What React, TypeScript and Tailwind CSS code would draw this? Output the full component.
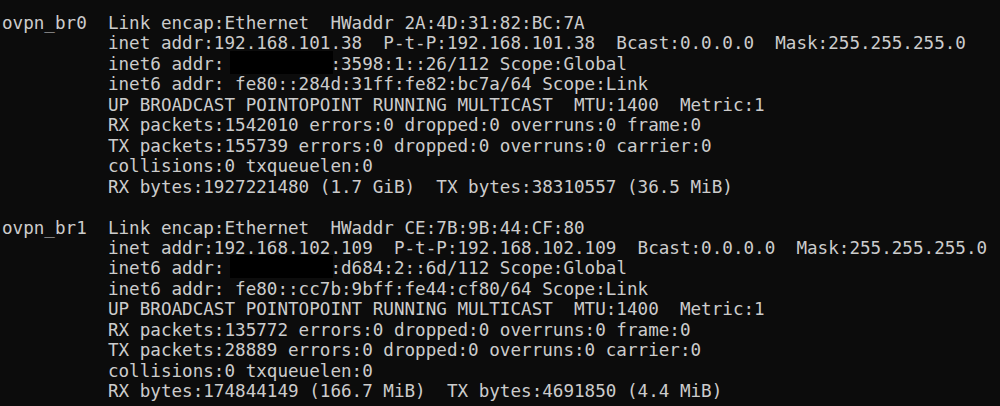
type Line = { text: string; redact?: [string, string] };

const pad = "          ";

const ifaces: { name: string; lines: Line[] }[] = [
  {
    name: "ovpn_br0",
    lines: [
      { text: "Link encap:Ethernet  HWaddr 2A:4D:31:82:BC:7A" },
      { text: "inet addr:192.168.101.38  P-t-P:192.168.101.38  Bcast:0.0.0.0  Mask:255.255.255.0" },
      { text: "", redact: ["inet6 addr: ", ":3598:1::26/112 Scope:Global"] },
      { text: "inet6 addr: fe80::284d:31ff:fe82:bc7a/64 Scope:Link" },
      { text: "UP BROADCAST POINTOPOINT RUNNING MULTICAST  MTU:1400  Metric:1" },
      { text: "RX packets:1542010 errors:0 dropped:0 overruns:0 frame:0" },
      { text: "TX packets:155739 errors:0 dropped:0 overruns:0 carrier:0" },
      { text: "collisions:0 txqueuelen:0" },
      { text: "RX bytes:1927221480 (1.7 GiB)  TX bytes:38310557 (36.5 MiB)" },
    ],
  },
  {
    name: "ovpn_br1",
    lines: [
      { text: "Link encap:Ethernet  HWaddr CE:7B:9B:44:CF:80" },
      { text: "inet addr:192.168.102.109  P-t-P:192.168.102.109  Bcast:0.0.0.0  Mask:255.255.255.0" },
      { text: "", redact: ["inet6 addr: ", ":d684:2::6d/112 Scope:Global"] },
      { text: "inet6 addr: fe80::cc7b:9bff:fe44:cf80/64 Scope:Link" },
      { text: "UP BROADCAST POINTOPOINT RUNNING MULTICAST  MTU:1400  Metric:1" },
      { text: "RX packets:135772 errors:0 dropped:0 overruns:0 frame:0" },
      { text: "TX packets:28889 errors:0 dropped:0 overruns:0 carrier:0" },
      { text: "collisions:0 txqueuelen:0" },
      { text: "RX bytes:174844149 (166.7 MiB)  TX bytes:4691850 (4.4 MiB)" },
    ],
  },
];

function Row({ prefix, line }: { prefix: string; line: Line }) {
  if (line.redact) {
    return (
      <div>
        {prefix}
        {line.redact[0]}
        <span className="relative">
          {"         "}
          {/* redaction box, hangs a bit past the text cells */}
          <span className="absolute left-[-5px] top-[-3px] w-[103px] h-[23px] bg-black" />
        </span>
        {line.redact[1]}
      </div>
    );
  }
  return (
    <div>
      {prefix}
      {line.text}
    </div>
  );
}

export default function App() {
  return (
    <div className="w-[1000px] h-[406px] bg-[#0c0c0c] overflow-hidden">
      <pre className="pl-[2px] pt-[13px] text-[#cccccc] text-[17.6px] leading-[20.45px] font-['DejaVu_Sans_Mono',monospace] whitespace-pre">
        {ifaces.map((iface, i) => (
          <div key={iface.name}>
            {i > 0 && <div>{" "}</div>}
            {iface.lines.map((line, j) => (
              <Row key={j} prefix={j === 0 ? iface.name + "  " : pad} line={line} />
            ))}
          </div>
        ))}
      </pre>
    </div>
  );
}
